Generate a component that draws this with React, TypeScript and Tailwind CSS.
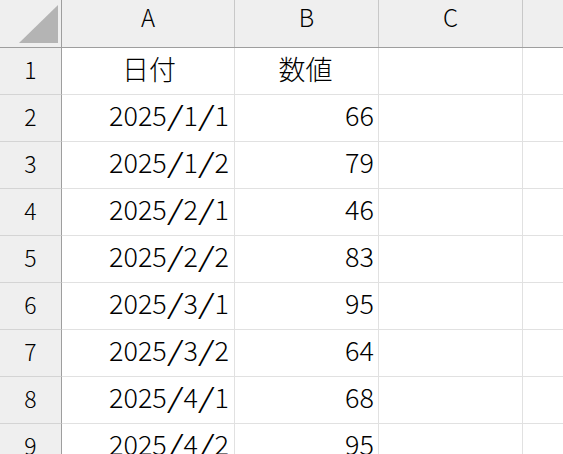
import React from "react";

const rows: [string, string, string][] = [
  ["1", "日付", "数値"],
  ["2", "2025/1/1", "66"],
  ["3", "2025/1/2", "79"],
  ["4", "2025/2/1", "46"],
  ["5", "2025/2/2", "83"],
  ["6", "2025/3/1", "95"],
  ["7", "2025/3/2", "64"],
  ["8", "2025/4/1", "68"],
  ["9", "2025/4/2", "95"],
];

const font = { fontFamily: '"Noto Sans CJK JP", "Noto Sans", sans-serif' };

function DateText({ s }: { s: string }) {
  const parts = s.split("/");
  return (
    <span className="whitespace-nowrap">
      {parts.map((p, i) => (
        <React.Fragment key={i}>
          {i > 0 && <span className="inline-block mx-[3px] scale-x-[1.6]">/</span>}
          {p}
        </React.Fragment>
      ))}
    </span>
  );
}

export default function App() {
  return (
    <div className="w-[563px] h-[454px] overflow-hidden bg-white text-black font-light" style={font}>
      {/* header row */}
      <div className="flex h-[48px] border-b border-[#9e9e9e] bg-[#efefef]">
        <div className="relative w-[62px] shrink-0 border-r border-[#9e9e9e]">
          <svg className="absolute left-0 top-0" width="61" height="47">
            <polygon points="19,43 58,43 58,5" fill="#b4b4b4" />
          </svg>
        </div>
        <div className="w-[173px] shrink-0 border-r border-[#c8c8c8] flex items-center justify-center text-[24px] pb-[13px]">A</div>
        <div className="w-[144px] shrink-0 border-r border-[#c8c8c8] flex items-center justify-center text-[24px] pb-[13px]">B</div>
        <div className="w-[144px] shrink-0 border-r border-[#c8c8c8] flex items-center justify-center text-[24px] pb-[13px]">C</div>
        <div className="flex-1" />
      </div>
      {rows.map(([n, a, b], i) => (
        <div key={n} className="flex h-[47px]">
          <div className="w-[62px] shrink-0 border-r border-b border-r-[#9e9e9e] border-b-[#d4d4d4] bg-[#efefef] flex items-center justify-center text-[23px] pb-[3px]">
            {n}
          </div>
          {i === 0 ? (
            <>
              <div className="w-[173px] shrink-0 border-r border-b border-[#e1e1e1] flex items-center justify-center text-[27px] pl-[2px] pb-[4px]">
                {a}
              </div>
              <div className="w-[144px] shrink-0 border-r border-b border-[#e1e1e1] flex items-center justify-center text-[27px] pr-[2px] pb-[4px]">
                {b}
              </div>
            </>
          ) : (
            <>
              <div className="w-[173px] shrink-0 border-r border-b border-[#e1e1e1] flex items-center justify-end pr-[5px] text-[27px] pb-[5px]">
                <DateText s={a} />
              </div>
              <div className="w-[144px] shrink-0 border-r border-b border-[#e1e1e1] flex items-center justify-end pr-[4px] text-[27px] pb-[5px]">
                {b}
              </div>
            </>
          )}
          <div className="w-[144px] shrink-0 border-r border-b border-[#e1e1e1]" />
          <div className="flex-1 border-b border-[#e1e1e1]" />
        </div>
      ))}
    </div>
  );
}
